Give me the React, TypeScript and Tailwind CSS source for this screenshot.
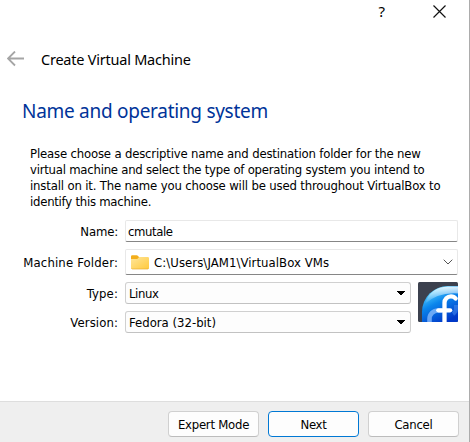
import React from "react";

const ui = "font-['DejaVu_Sans_Condensed','DejaVu_Sans',sans-serif] [font-stretch:condensed]";
const heading = "font-['Noto_Sans','Open_Sans',sans-serif]";

function Label({ children, className }: { children: React.ReactNode; className: string }) {
  return <div className={`w-[118px] shrink-0 pt-px text-right ${className}`}>{children}</div>;
}

function Select({ children, className }: { children: React.ReactNode; className: string }) {
  return (
    <div className="flex h-[22px] w-[286px] items-center justify-between rounded-[3px] border border-[#d0d0d0] border-b-[#c2c2c2] bg-[#fdfdfd] pr-[5px] pl-[3px]">
      <span className={`pt-px ${className}`}>{children}</span>
      <svg width="8" height="5" viewBox="0 0 8 5" shapeRendering="crispEdges">
        <path d="M0 0h8v1h-1v1h-1v1h-1v1h-2v-1h-1v-1h-1v-1h-1z" fill="#000" />
      </svg>
    </div>
  );
}

function Button({ children, primary }: { children: React.ReactNode; primary?: boolean }) {
  return (
    <button
      className={
        primary
          ? "h-[26px] w-[91px] rounded-[4px] border border-[#0078d4] bg-[#fdfdfd] pt-px tracking-[-0.25px]"
          : "h-[26px] w-[91px] rounded-[4px] border border-[#d0d0d0] border-b-[#bcbcbc] bg-[#fdfdfd] pt-px tracking-[-0.25px]"
      }
    >
      {children}
    </button>
  );
}

function Folder() {
  return (
    <svg width="18" height="15" viewBox="0 0 18 15">
      <defs>
        <linearGradient id="folder" x1="0" y1="0" x2="1" y2="1">
          <stop offset="0" stopColor="#ffe69b" />
          <stop offset="1" stopColor="#ffc93d" />
        </linearGradient>
      </defs>
      <path d="M0 1.500Q0 .3 1.200.3h4.500q.7 0 1.100.5l1.400 1.500v3H0z" fill="#f3ae1b" />
      <path d="M0 4h6.300l1.900-2h8.600Q18 2 18 3.200v9.600q0 1.200-1.200 1.200H1.200Q0 14 0 12.800z" fill="url(#folder)" />
      <path d="M.4 13.300q.3.7 1 .7h15.200q.7 0 1-.7" stroke="#e8ac32" strokeWidth=".7" fill="none" />
    </svg>
  );
}

function Fedora() {
  return (
    <svg width="40" height="40" viewBox="0 0 40 40" className="shrink-0">
      <defs>
        <linearGradient id="orb" x1="0.15" y1="0" x2="0.65" y2="1">
          <stop offset="0" stopColor="#9beaff" />
          <stop offset=".2" stopColor="#48c4fb" />
          <stop offset=".48" stopColor="#0b86ec" />
          <stop offset="1" stopColor="#0038c8" />
        </linearGradient>
        <linearGradient id="shine" x1="0" y1="0" x2="0" y2="1">
          <stop offset="0" stopColor="#fff" stopOpacity=".85" />
          <stop offset="1" stopColor="#fff" stopOpacity="0" />
        </linearGradient>
        <clipPath id="tile">
          <rect width="40" height="40" rx="1.5" />
        </clipPath>
      </defs>
      <g clipPath="url(#tile)">
        <rect width="40" height="40" fill="#3c414e" />
        <path d="M4 40V30A26 26 0 0 1 30 4h10v36z" fill="url(#orb)" />
        <path d="M7 22Q12 5 30 4.500h10v7Q20 10 7 22z" fill="url(#shine)" />
        <path d="M24 28.500h-4a8.500 8.500 0 0 0-8.500 8.500v5" fill="none" stroke="#86b9fb" strokeWidth="4.600" opacity=".8" />
        <path d="M38 23v4q0 3-3 5" fill="none" stroke="#5697f4" strokeWidth="4" opacity=".45" />
        <path d="M26.500 41V21a6.500 6.500 0 0 1 6.500-6.700q3 0 4.600 2.200" fill="none" stroke="#fff" strokeWidth="4.300" strokeLinecap="round" />
        <path d="M20.300 28.300h11.900" stroke="#fff" strokeWidth="4.200" strokeLinecap="round" />
      </g>
    </svg>
  );
}

export default function App() {
  return (
    <main className={`flex h-[442px] w-[470px] flex-col border-r border-[#acacac] bg-white text-[13px] leading-4 text-black ${ui}`}>
      <header className="flex h-[22px] shrink-0 items-center justify-end pr-[23px]">
        <span className={`mr-[48px] text-[15px] ${heading}`}>?</span>
        <svg width="13" height="13" viewBox="0 0 13 13">
          <path d="M.5.5l12 12M12.500.5l-12 12" stroke="#111" strokeWidth="1.200" />
        </svg>
      </header>

      <div className="mt-[24px] flex h-[26px] shrink-0 items-center pl-[7px]">
        <svg width="17" height="16" viewBox="0 0 17 16">
          <path d="M8 .5L1 7.500l7 7M1 7.500h16" fill="none" stroke="#a5a5a5" strokeWidth="1.800" />
        </svg>
        <h1 className={`ml-[17px] text-[14.5px] tracking-[-0.23px] ${heading}`}>Create Virtual Machine</h1>
      </div>

      <h2 className={`mt-[25px] ml-[22px] h-[28px] shrink-0 text-[19px] leading-7 tracking-[-0.28px] text-[#003399] ${heading}`}>
        Name and operating system
      </h2>

      <p className="mt-[21px] ml-[30px] shrink-0 whitespace-nowrap">
        <span className="tracking-[-0.175px]">Please choose a descriptive name and destination folder for the new</span><br />
        <span className="tracking-[-0.24px]">virtual machine and select the type of operating system you intend to</span><br />
        <span className="tracking-[-0.165px]">install on it. The name you choose will be used throughout VirtualBox to</span><br />
        <span className="tracking-[-0.25px]">identify this machine.</span>
      </p>

      <form className="mt-[10px] flex shrink-0 flex-col">
        <div className="flex h-[22px] items-center gap-[7px]">
          <Label className="tracking-[-0.15px]">Name:</Label>
          <div className="flex h-[22px] w-[333px] items-center rounded-[2px] border border-[#e8e8e8] border-b-[#868686] pt-px pl-[2px] tracking-[-0.4px]">cmutale</div>
        </div>
        <div className="mt-[7px] flex h-[26px] items-center gap-[7px]">
          <Label className="tracking-[0.15px]">Machine Folder:</Label>
          <div className="flex h-[26px] w-[333px] items-center rounded-[2px] border border-[#e8e8e8] border-b-[#868686] pr-[4px] pl-[5px]">
            <Folder />
            <span className="ml-[5px] grow pt-px tracking-[0.07px]">C:\Users\JAM1\VirtualBox VMs</span>
            <svg width="10" height="6" viewBox="0 0 10 6">
              <path d="M.7.7L5 5 9.300.7" fill="none" stroke="#555" />
            </svg>
          </div>
        </div>
        <div className="mt-[7px] flex gap-[7px]">
          <div className="flex flex-col gap-[7px]">
            <div className="flex h-[22px] items-center gap-[7px]">
              <Label className="tracking-[0.15px]">Type:</Label>
              <Select className="tracking-[-0.4px]">Linux</Select>
            </div>
            <div className="flex h-[22px] items-center gap-[7px]">
              <Label className="tracking-[0.1px]">Version:</Label>
              <Select className="tracking-normal">Fedora (32-bit)</Select>
            </div>
          </div>
          <Fedora />
        </div>
      </form>

      <footer className="mt-auto flex h-[41px] shrink-0 justify-end gap-[9px] border-t border-[#dedede] bg-[#efefef] pt-[9px] pr-[10px]">
        <Button>Expert Mode</Button>
        <Button primary>Next</Button>
        <Button>Cancel</Button>
      </footer>
    </main>
  );
}
